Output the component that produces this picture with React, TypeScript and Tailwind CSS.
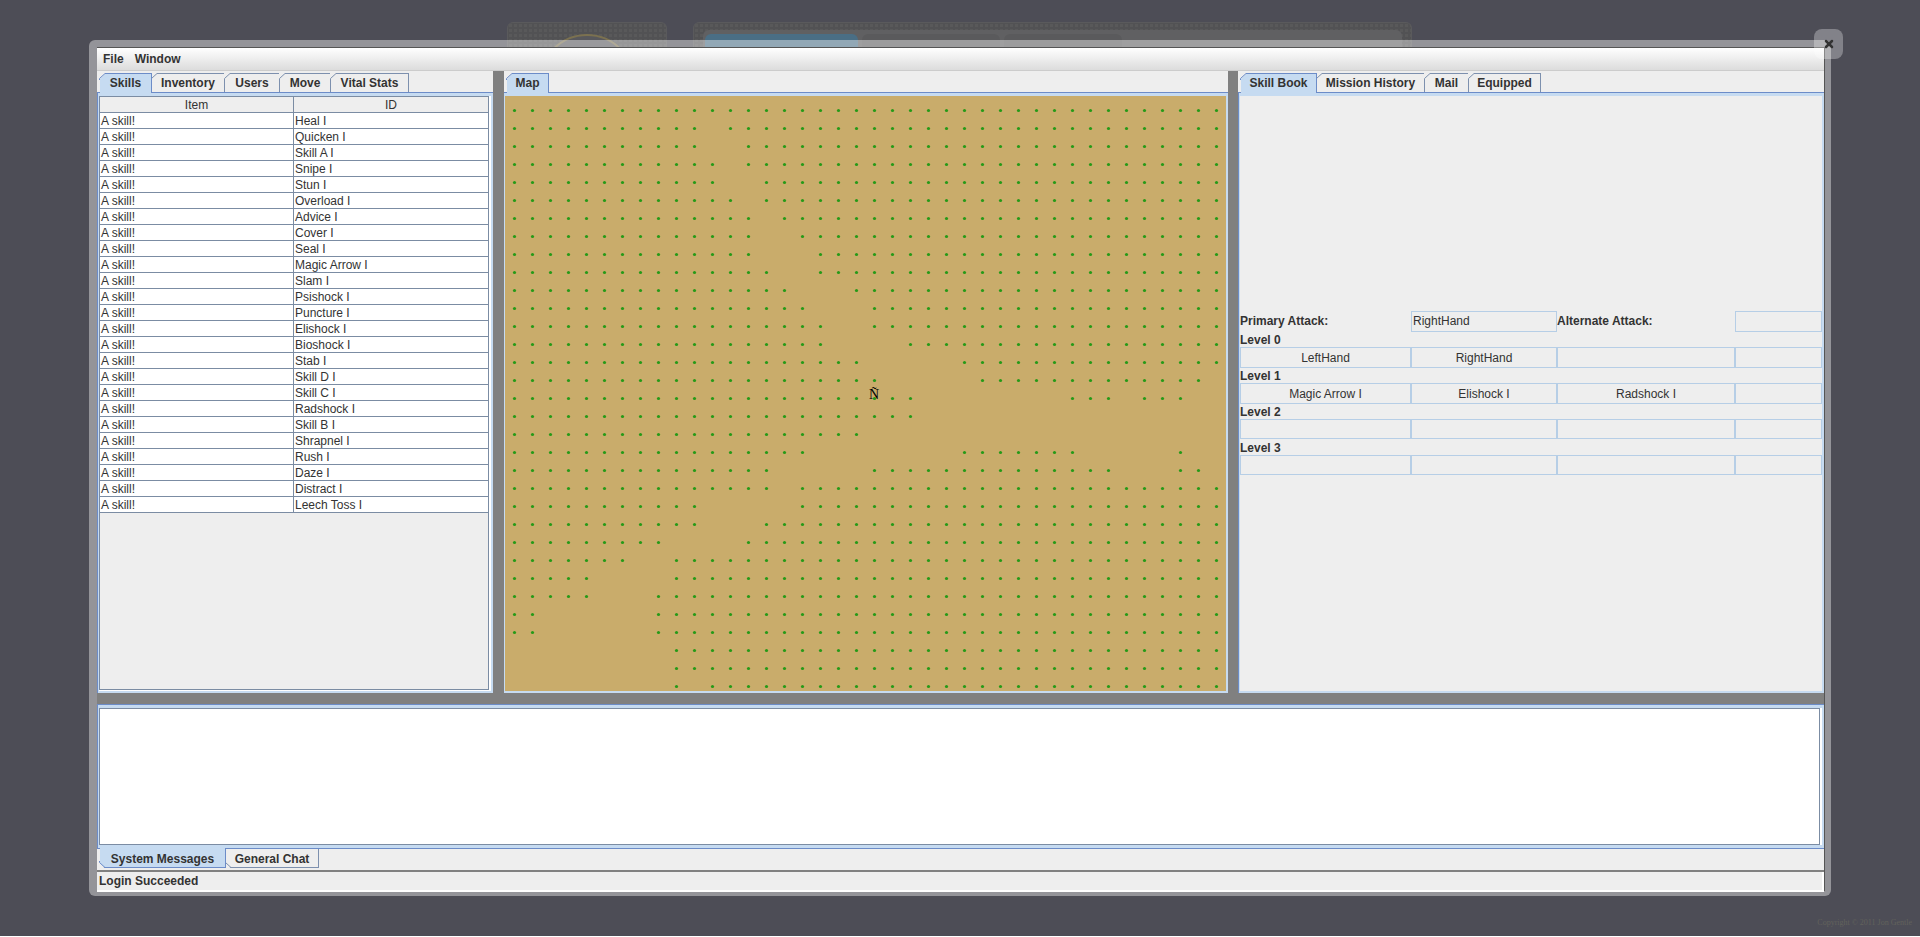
import { X } from "lucide-react";

const SKILLS = [
  "Heal I", "Quicken I", "Skill A I", "Snipe I", "Stun I", "Overload I", "Advice I", "Cover I", "Seal I",
  "Magic Arrow I", "Slam I", "Psishock I", "Puncture I", "Elishock I", "Bioshock I", "Stab I", "Skill D I",
  "Skill C I", "Radshock I", "Skill B I", "Shrapnel I", "Rush I", "Daze I", "Distract I", "Leech Toss I",
];

// walkable tiles per map row, as [from, to] column ranges
const MAP_ROWS: number[][][] = [
  [[0, 39]],
  [[0, 10], [12, 39]],
  [[0, 10], [13, 39]],
  [[0, 11], [13, 39]],
  [[0, 11], [14, 39]],
  [[0, 12], [14, 39]],
  [[0, 13], [15, 39]],
  [[0, 13], [16, 39]],
  [[0, 13], [17, 39]],
  [[0, 14], [17, 39]],
  [[0, 15], [19, 39]],
  [[0, 16], [20, 39]],
  [[0, 17], [20, 39]],
  [[0, 17], [22, 39]],
  [[0, 19], [25, 39]],
  [[0, 20], [26, 38]],
  [[0, 22], [31, 33], [35, 37]],
  [[0, 22]],
  [[0, 19]],
  [[0, 16], [25, 31], [37, 37]],
  [[0, 14], [20, 33], [37, 38]],
  [[0, 14], [16, 39]],
  [[0, 10], [16, 39]],
  [[0, 10], [14, 39]],
  [[0, 8], [13, 39]],
  [[0, 6], [9, 39]],
  [[0, 4], [9, 39]],
  [[0, 4], [8, 39]],
  [[0, 1], [8, 39]],
  [[0, 1], [8, 39]],
  [[9, 39]],
  [[9, 39]],
  [[9, 9], [11, 39]],
];

const dots: { x: number; y: number }[] = [];
MAP_ROWS.forEach((ranges, row) => {
  ranges.forEach(([from, to]) => {
    for (let col = from; col <= to; col++) {
      dots.push({ x: 9.5 + col * 18, y: 14.5 + row * 18 });
    }
  });
});

function Tab({ label, width, active, bottom }: { label: string; width: number; active?: boolean; bottom?: boolean }) {
  const line = active ? "#6c8cc8" : "#7d90ae";
  return (
    <div
      className={`relative flex shrink-0 items-center justify-center border-r text-[12px] font-bold text-[#333] ${
        bottom ? "border-b pt-[2px]" : "border-t"
      } ${active ? "z-10 h-[20px] bg-[#c6dbf1] border-[#6c8cc8]" : "h-[19px] bg-[#eeeeee] border-[#7d90ae]"} ${
        active && bottom ? "-mt-[1px]" : ""
      } ${active && !bottom ? "pb-[1px]" : ""}`}
      style={{ width }}
    >
      {label}
      <svg width="7" height="7" className={`absolute -left-[1px] ${bottom ? "-bottom-[1px]" : "-top-[1px]"}`}>
        {bottom ? (
          <>
            <path d="M0 0V1.5L5.5 7H0Z" fill="#eeeeee" />
            <path d="M0.5 0V1.5L6 6.5H7" stroke={line} fill="none" />
          </>
        ) : (
          <>
            <path d="M0 0H7L0 7Z" fill="#eeeeee" />
            <path d="M0.5 7V5.5L6 0.5H7" stroke={line} fill="none" />
          </>
        )}
      </svg>
    </div>
  );
}

function TabRow({ tabs }: { tabs: [string, number][] }) {
  return (
    <div className="flex h-[21px] shrink-0 items-start bg-[#eeeeee] pl-[3px] pt-[2px]">
      {tabs.map(([label, width], i) => (
        <Tab key={label} label={label} width={width} active={i === 0} />
      ))}
    </div>
  );
}

function SkillTable() {
  return (
    <div className="h-full border-b border-r-2 border-white">
      <div className="h-full border border-[#7b8ca3] bg-[#eeeeee] text-[12px] text-[#333]">
        <div className="grid h-[16px] grid-cols-[194px_1fr] border-b border-[#7b8ca3] text-center leading-[16px]">
          <div className="border-r border-[#7b8ca3]">Item</div>
          <div>ID</div>
        </div>
        {SKILLS.map((skill) => (
          <div key={skill} className="grid h-[16px] grid-cols-[194px_1fr] border-b border-[#7b8ca3] bg-white leading-[16px]">
            <div className="border-r border-[#7b8ca3] pl-[1px]">A skill!</div>
            <div className="pl-[1px]">{skill}</div>
          </div>
        ))}
      </div>
    </div>
  );
}

function MapCanvas() {
  return (
    <div className="relative h-full bg-[#c9ac6b]">
      <svg width="721" height="595" className="block">
        {dots.map((d) => (
          <circle key={`${d.x}-${d.y}`} cx={d.x} cy={d.y} r="1.6" fill="#259a17" />
        ))}
      </svg>
      <span className="absolute left-[364px] top-[291px] font-['Liberation_Serif',serif] text-[14px] leading-[15px] text-black">
        Ñ
      </span>
    </div>
  );
}

const cell = "flex items-center justify-center border border-[#b6cee6] pt-[1px] text-[12px] text-[#333]";

function SkillRow({ label, slots }: { label: string; slots: string[] }) {
  return (
    <>
      <div className="h-[16px] text-[12px] font-bold leading-[18px] text-[#333]">{label}</div>
      <div className="grid h-[20px] grid-cols-[171px_146px_178px_1fr]">
        {[0, 1, 2, 3].map((i) => (
          <div key={i} className={cell}>
            {slots[i]}
          </div>
        ))}
      </div>
    </>
  );
}

function SkillBook() {
  return (
    <div className="h-full bg-[#eeeeee] pt-[215px]">
      <div className="grid h-[20px] grid-cols-[171px_146px_178px_1fr] text-[12px] text-[#333]">
        <div className="font-bold leading-[21px]">Primary Attack:</div>
        <div className="border border-[#b6cee6] pl-[1px] leading-[19px]">RightHand</div>
        <div className="font-bold leading-[21px]">Alternate Attack:</div>
        <div className="border border-[#b6cee6]" />
      </div>
      <SkillRow label="Level 0" slots={["LeftHand", "RightHand"]} />
      <SkillRow label="Level 1" slots={["Magic Arrow I", "Elishock I", "Radshock I"]} />
      <SkillRow label="Level 2" slots={[]} />
      <SkillRow label="Level 3" slots={[]} />
    </div>
  );
}

export default function App() {
  return (
    <div className="relative h-[936px] w-full overflow-hidden bg-[#4d4d56] font-['Liberation_Sans',sans-serif]">
      {/* page dimmed behind the game window */}
      <div className="flex pl-[507px] pt-[22px]">
        <div className="relative h-[60px] w-[160px] overflow-hidden rounded-md border border-[#5a5a5c] bg-[#525254] bg-[radial-gradient(circle,#59595a_1.5px,transparent_2px)] bg-size-[5px_5px]">
          <div className="mx-auto mt-[11px] h-[96px] w-[96px] rounded-full border-2 border-[#7b7150] bg-[#58585c]" />
        </div>
        <div className="ml-[26px] h-[60px] w-[719px] rounded-md border border-[#5a5a5c] bg-[#525254] bg-[radial-gradient(circle,#59595a_1.5px,transparent_2px)] bg-size-[5px_5px] px-[9px] pt-[7px]">
          <div className="flex h-[50px] gap-[4px] rounded-md bg-[#606062] px-[2px] pt-[4px]">
            <div className="w-[153px] rounded-t-md bg-[#4a6e85]" />
            <div className="w-[138px] rounded-t-md bg-[#5a5a5c]" />
            <div className="w-[118px] rounded-t-md bg-[#5a5a5c]" />
          </div>
        </div>
      </div>

      <div className="absolute left-[89px] top-[40px] h-[856px] w-[1742px] rounded-md bg-white/40 pb-[5px] pl-[8px] pr-[6px] pt-[7px]">
        <div className="flex h-full flex-col border-b border-r border-t border-[#555] bg-[#808080]">
          <div className="flex h-[23px] shrink-0 items-center gap-[11px] border-b border-[#cccccc] bg-linear-to-b from-white to-[#dcdcdc] pb-[1px] pl-[6px] text-[12px] font-bold text-[#333]">
            <span>File</span>
            <span>Window</span>
          </div>

          <div className="flex h-[622px] shrink-0 bg-[#808080]">
            <div className="flex w-[396px] flex-col">
              <TabRow tabs={[["Skills", 52], ["Inventory", 73], ["Users", 55], ["Move", 51], ["Vital Stats", 78]]} />
              <div className="min-h-0 flex-1 border-l border-t border-[#6c8cc8]">
                <div className="h-full border-b-[2px] border-l border-r-2 border-t-[3px] border-[#c6dbf1]">
                  <SkillTable />
                </div>
              </div>
            </div>

            <div className="ml-[11px] flex w-[724px] flex-col">
              <TabRow tabs={[["Map", 42]]} />
              <div className="min-h-0 flex-1 border-t border-[#6c8cc8]">
                <div className="h-full border-b-[2px] border-l border-r-[2px] border-t-[3px] border-[#c6dbf1]">
                  <MapCanvas />
                </div>
              </div>
            </div>

            <div className="ml-[10px] flex min-w-0 flex-1 flex-col">
              <TabRow tabs={[["Skill Book", 76], ["Mission History", 108], ["Mail", 44], ["Equipped", 72]]} />
              <div className="min-h-0 flex-1 border-l border-t border-[#6c8cc8]">
                <div className="h-full border-b-[2px] border-l border-r-2 border-t-[3px] border-[#c6dbf1]">
                  <SkillBook />
                </div>
              </div>
            </div>
          </div>

          <div className="h-[11px] shrink-0 bg-[#808080]" />

          <div className="flex flex-1 flex-col bg-[#eeeeee]">
            <div className="h-[145px] shrink-0 border-y border-l border-[#6c8cc8]">
              <div className="h-full border-x-2 border-y-[3px] border-l border-[#c6dbf1] bg-white pr-[2px]">
                <div className="h-full border border-[#7b8ca3] bg-white" />
              </div>
            </div>
            <div className="flex h-[21px] shrink-0 items-start pl-[3px]">
              <Tab label="System Messages" width={126} active bottom />
              <Tab label="General Chat" width={93} bottom />
            </div>
            <div className="flex-1 border-t-2 border-[#808080] bg-white pb-[2px] pr-[2px]">
              <div className="h-full bg-[#eeeeee] pl-[2px] text-[12px] font-bold leading-[18px] text-[#333]">
                Login Succeeded
              </div>
            </div>
          </div>
        </div>
      </div>

      <button className="absolute left-[1814px] top-[29px] flex h-[30px] w-[29px] items-center justify-center rounded-lg bg-white/30 text-[#333]">
        <X size={12} strokeWidth={5} />
      </button>

      <div className="absolute right-[8px] top-[918px] font-['Liberation_Serif',serif] text-[8px] leading-[10px] text-[#62625c]">
        Copyright © 2011 Jon Gentle
      </div>
    </div>
  );
}
